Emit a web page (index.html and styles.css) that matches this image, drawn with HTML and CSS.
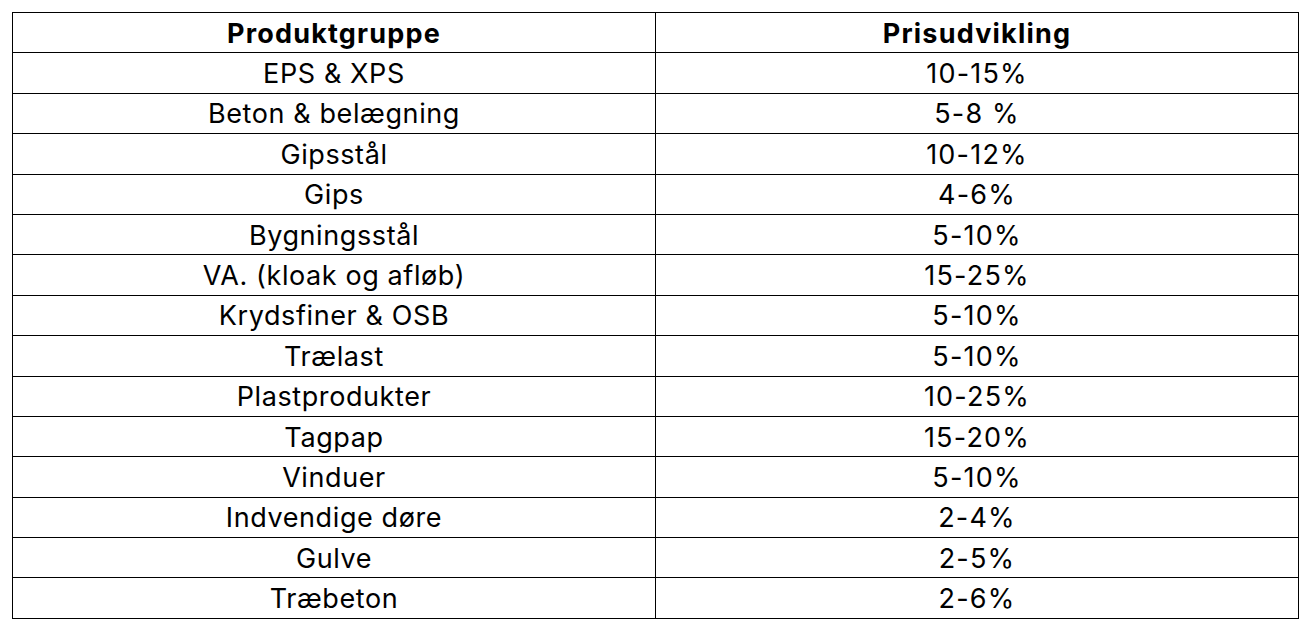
FILE: index.html
```html
<!DOCTYPE html>
<html lang="da">
<head>
<meta charset="utf-8">
<link rel="stylesheet" href="styles.css">
</head>
<body>
<table class="price-table">
  <colgroup><col class="c1"><col class="c2"></colgroup>
  <thead>
    <tr><th>Produktgruppe</th><th>Prisudvikling</th></tr>
  </thead>
  <tbody>
    <tr><td>EPS &amp; XPS</td><td>10-15%</td></tr>
    <tr><td>Beton &amp; belægning</td><td>5-8 %</td></tr>
    <tr><td>Gipsstål</td><td>10-12%</td></tr>
    <tr><td>Gips</td><td>4-6%</td></tr>
    <tr><td>Bygningsstål</td><td>5-10%</td></tr>
    <tr><td>VA. (kloak og afløb)</td><td>15-25%</td></tr>
    <tr><td>Krydsfiner &amp; OSB</td><td>5-10%</td></tr>
    <tr><td>Trælast</td><td>5-10%</td></tr>
    <tr><td>Plastprodukter</td><td>10-25%</td></tr>
    <tr><td>Tagpap</td><td>15-20%</td></tr>
    <tr><td>Vinduer</td><td>5-10%</td></tr>
    <tr><td>Indvendige døre</td><td>2-4%</td></tr>
    <tr><td>Gulve</td><td>2-5%</td></tr>
    <tr><td>Træbeton</td><td>2-6%</td></tr>
  </tbody>
</table>
</body>
</html>
```
FILE: styles.css
```css
html, body {
  margin: 0;
  padding: 0;
  background: #ffffff;
}
body {
  padding: 12px 0 0 12px;
  font-family: "Inter", "Liberation Sans", sans-serif;
  color: #000;
}
.price-table {
  border-collapse: collapse;
  width: 1286px;
  table-layout: fixed;
}
.price-table .c1 { width: 643px; }
.price-table .c2 { width: 643px; }
.price-table th,
.price-table td {
  border: 1px solid #000;
  text-align: center;
  vertical-align: middle;
  padding: 1px 0 0 0;
  height: 38.4px;
  font-size: 27px;
  line-height: 1;
  letter-spacing: 0.6px;
}
.price-table td:last-child {
  letter-spacing: 1.2px;
}
.price-table th {
  font-weight: 700;
  letter-spacing: 1.2px;
}
```
